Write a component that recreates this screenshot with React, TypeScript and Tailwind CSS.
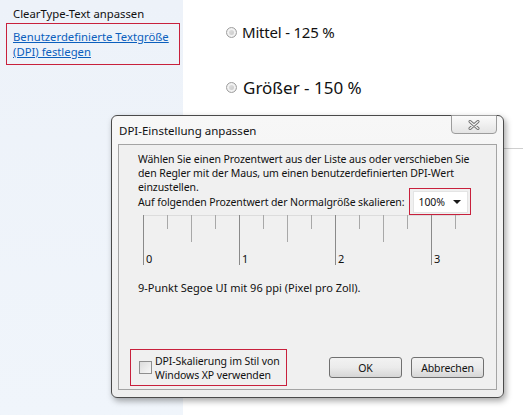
import React from "react"

const ui = { fontFamily: '"Noto Sans", "Open Sans", sans-serif' }

function Radio() {
  return (
    <span className="inline-block w-[11px] h-[11px] rounded-full border border-[#a0a0a0] bg-gradient-to-br from-[#e6e6e6] to-[#c4c4c4] shadow-[inset_0_0_0_2px_#f2f2f2]" />
  )
}

function Ruler() {
  const ticks = [0, 1, 2, 3, 4, 5, 6, 7, 8, 9, 10, 11, 12, 13]
  return (
    <svg width="340" height="52" className="block">
      <line x1="5" y1="0.5" x2="322" y2="0.5" stroke="#dcdcdc" />
      {ticks.map((t) => {
        const x = 5.5 + t * 24
        const major = t % 4 === 0
        const mid = t % 4 === 2
        const y2 = major ? 50 : mid ? 27 : 14
        return <line key={t} x1={x} y1="0" x2={x} y2={y2} stroke={major ? "#8a8a8a" : "#a8a8a8"} />
      })}
      {["0", "1", "2", "3"].map((n, i) => (
        <text key={n} x={8 + i * 96} y="48" fontSize="11" fill="#111" style={ui}>
          {n}
        </text>
      ))}
    </svg>
  )
}

export default function App() {
  return (
    <div className="relative w-[523px] h-[415px] overflow-hidden flex bg-white text-[#111]" style={ui}>
      <aside className="w-[183px] h-full shrink-0 bg-gradient-to-b from-[#edf2f9] to-[#f0f5fb] pt-[6px] pl-[6px] pr-[3px] text-[11.3px]">
        <div className="pl-[7px] leading-[16px] whitespace-nowrap">ClearType-Text anpassen</div>
        <div className="mt-px border border-[#c8203c] px-[6px] py-[5px] leading-[15px] whitespace-nowrap">
          <a className="text-[#0b5fbd] underline">
            Benutzerdefinierte Textgröße
            <br />
            (DPI) festlegen
          </a>
        </div>
      </aside>

      <main className="flex-1 pl-[43px]">
        <div className="mt-[21px] flex items-center gap-[5px] text-[15px] tracking-[-0.2px] whitespace-nowrap">
          <Radio />
          <span>Mittel - 125 %</span>
        </div>
        <div className="mt-[31px] flex items-center gap-[6px] text-[17px] whitespace-nowrap">
          <Radio />
          <span>Größer - 150 %</span>
        </div>
        <div className="mt-[48px] ml-[277px] h-px bg-[#cfcfcf]" />
      </main>

      {/* dialog window */}
      <div className="absolute left-[111px] top-[115px] w-[393px] h-[283px] rounded-[6px] border border-[#4a4a4a] bg-gradient-to-b from-[#f7f7f7] to-[#eeeeee] shadow-[2px_3px_6px_rgba(0,0,0,0.35)] flex flex-col px-[6px] pb-[7px] text-[10.5px] tracking-[-0.1px]">
        <div className="h-[28px] flex items-start justify-between">
          <span className="pl-[1px] pt-[6px] whitespace-nowrap text-[11.5px] tracking-normal">DPI-Einstellung anpassen</span>
          <div className="-mt-px w-[46px] h-[19px] rounded-b-[4px] border border-[#9c9c9c] bg-gradient-to-b from-[#fbfbfb] to-[#e4e4e4] flex items-center justify-center">
            <svg width="12" height="10" viewBox="0 0 12 10">
              <path d="M2 1.5 L10 8.5 M10 1.5 L2 8.5" stroke="#707070" strokeWidth="3" strokeLinecap="round" />
              <path d="M2 1.5 L10 8.5 M10 1.5 L2 8.5" stroke="#f4f4f4" strokeWidth="1.2" strokeLinecap="round" />
            </svg>
          </div>
        </div>

        <div className="flex-1 border border-[#a4a4a4] bg-[#f0f0f0] flex flex-col leading-[14px] whitespace-nowrap">
          <p className="pl-[19px] pt-[7px]">
            Wählen Sie einen Prozentwert aus der Liste aus oder verschieben Sie
            <br />
            den Regler mit der Maus, um einen benutzerdefinierten DPI-Wert
            <br />
            einzustellen.
          </p>
          <div className="flex items-center pl-[19px] -mt-[6px]">
            <span className="w-[271px]">Auf folgenden Prozentwert der Normalgröße skalieren:</span>
            <div className="border border-[#c8203c] w-[62px] h-[27px] flex items-center justify-center">
              <div className="w-[55px] h-[22px] bg-white border border-[#e4e4e4] flex items-center justify-between pl-[5px] pr-[6px]">
                <span>100%</span>
                <svg width="8" height="4" viewBox="0 0 8 4">
                  <path d="M0 0 H8 L4 4 Z" fill="#1a1a1a" />
                </svg>
              </div>
            </div>
          </div>
          <div className="pl-[19px]">
            <Ruler />
          </div>
          <p className="pl-[19px] mt-[14px] text-[11px] tracking-normal">9-Punkt Segoe UI mit 96 ppi (Pixel pro Zoll).</p>

          <div className="mt-auto flex items-end justify-between pl-[11px] pr-[12px] pb-[3px]">
            <label className="w-[157px] h-[37px] border border-[#c8203c] flex items-center gap-[3px] pl-[8px]">
              <span className="w-[13px] h-[13px] border border-[#8f8f8f] bg-gradient-to-br from-[#dcdcdc] to-[#f8f8f8] shrink-0" />
              <span className="leading-[14px]">
                DPI-Skalierung im Stil von
                <br />
                Windows XP verwenden
              </span>
            </label>
            <div className="flex gap-[9px] mb-[8px]">
              <button className="w-[73px] h-[21px] rounded-[3px] border border-[#707070] bg-gradient-to-b from-[#f2f2f2] via-[#ebebeb] to-[#d6d6d6]">
                OK
              </button>
              <button className="w-[73px] h-[21px] rounded-[3px] border border-[#707070] bg-gradient-to-b from-[#f2f2f2] via-[#ebebeb] to-[#d6d6d6]">
                Abbrechen
              </button>
            </div>
          </div>
        </div>
      </div>
    </div>
  )
}
